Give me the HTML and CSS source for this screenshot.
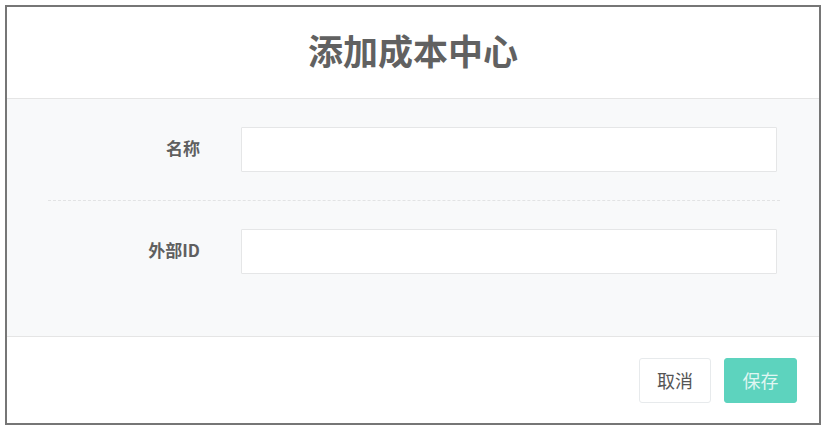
FILE: index.html
```html
<!DOCTYPE html>
<html lang="zh-CN">
<head>
<meta charset="utf-8">
<title>添加成本中心</title>
<link rel="stylesheet" href="styles.css">
</head>
<body>
<div class="modal">
  <div class="modal-header">
    <h4 class="modal-title">添加成本中心</h4>
  </div>
  <div class="modal-body">
    <div class="form-group">
      <label class="control-label">名称</label>
      <input class="form-control" type="text">
    </div>
    <div class="hr-line-dashed"></div>
    <div class="form-group">
      <label class="control-label">外部ID</label>
      <input class="form-control" type="text">
    </div>
  </div>
  <div class="modal-footer">
    <button class="btn btn-white" type="button">取消</button>
    <button class="btn btn-primary" type="button">保存</button>
  </div>
</div>
</body>
</html>
```
FILE: styles.css
```css
html, body {
  margin: 0;
  padding: 0;
  background: #ffffff;
}
body {
  padding: 5px 4px 2px 5px;
  font-family: "Noto Sans CJK SC", "Noto Sans", sans-serif;
}
.modal {
  width: 812px;
  height: 416px;
  border: 2px solid #767676;
  display: flex;
  flex-direction: column;
  background: #ffffff;
}
.modal-header {
  height: 91px;
  border-bottom: 1px solid #e5e5e5;
  display: flex;
  align-items: center;
  justify-content: center;
}
.modal-title {
  margin: 0 0 6px;
  font-size: 35px;
  font-weight: 700;
  color: #616161;
  line-height: 1;
}
.modal-body {
  flex: 1;
  background: #f8f9fa;
  padding-top: 28px;
  box-sizing: border-box;
}
.form-group {
  display: flex;
  align-items: center;
  padding-left: 41px;
  padding-right: 42px;
}
.control-label {
  width: 152px;
  text-align: right;
  font-size: 17px;
  font-weight: 700;
  color: #5f5f5f;
  margin-right: 41px;
  padding-bottom: 5px;
}
.form-control {
  flex: 1;
  height: 45px;
  box-sizing: border-box;
  border: 1px solid #e5e6e7;
  background: #ffffff;
  border-radius: 1px;
  margin: 0;
  outline: none;
}
.hr-line-dashed {
  border-top: 1px dashed #e2e3e4;
  margin: 28px 39px 28px 41px;
}
.modal-footer {
  height: 87px;
  border-top: 1px solid #e5e5e5;
  display: flex;
  align-items: center;
  justify-content: flex-end;
  padding-right: 22px;
  gap: 13px;
  box-sizing: border-box;
}
.btn {
  height: 45px;
  font-family: "Noto Sans CJK SC", "Noto Sans", sans-serif;
  font-size: 18px;
  border-radius: 3px;
  padding: 0;
  cursor: pointer;
}
.btn-white {
  width: 72px;
  background: #ffffff;
  border: 1px solid #e7eaec;
  color: #555555;
}
.btn-primary {
  width: 73px;
  background: #5dd3be;
  border: 1px solid #5dd3be;
  color: rgba(255, 255, 255, 0.82);
}
```
